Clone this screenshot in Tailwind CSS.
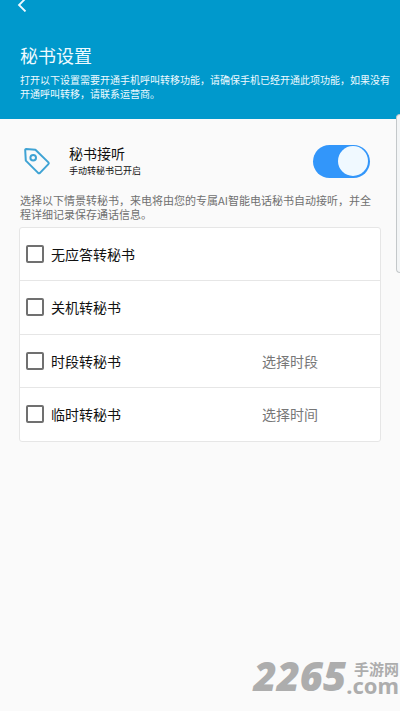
<!DOCTYPE html>
<html lang="zh-CN">
<head>
<meta charset="utf-8">
<meta name="viewport" content="width=device-width, initial-scale=1">
<title>秘书设置</title>
<script src="https://cdn.jsdelivr.net/npm/@tailwindcss/browser@4"></script>
</head>
<body class="relative flex min-h-screen flex-col overflow-x-hidden bg-[#fafafa] font-['Noto_Sans_CJK_SC',sans-serif] text-[#111]">
  <header class="bg-[#0099cc] pb-[18px] pl-5 text-[#effaff]">
    <a href="#" aria-label="返回" class="-ml-1 block w-4">
      <svg class="h-3 w-4" viewBox="0 0 16 12" fill="none" stroke="currentColor" stroke-width="1.8"><path d="M9.500 -1.500 3 5 9.500 11.500"/></svg>
    </a>
    <h1 class="mt-[31px] text-lg leading-6">秘书设置</h1>
    <p class="mt-[6px] whitespace-nowrap text-[10px] leading-[14px]">打开以下设置需要开通手机呼叫转移功能，请确保手机已经开通此项功能，如果没有<br>开通呼叫转移，请联系运营商。</p>
  </header>

  <main class="px-[19px] pt-6">
    <section class="flex items-center pr-[11px] pl-1">
      <svg class="h-8 w-7 shrink-0" viewBox="0 0 28 32" fill="none" stroke="#3fa3d4" stroke-width="2" stroke-linejoin="round"><path d="M2.200 5.200Q2 4.100 3.200 4.100L12.400 4.800 25.400 17.400Q26.200 18.300 25.400 19.100L17 27.900Q16 28.700 15.100 27.900L2.800 15.600Z"/><circle cx="10.200" cy="12.700" r="2.800"/></svg>
      <div class="ml-[18px] flex-1">
        <label for="answer" class="block text-sm leading-5">秘书接听</label>
        <p class="text-[9px] leading-4">手动转秘书已开启</p>
      </div>
      <input id="answer" type="checkbox" role="switch" checked class="flex h-[33px] w-[57px] appearance-none items-center rounded-full bg-[#a8a8a8] px-[2px] before:size-[30px] before:rounded-full before:bg-[#f0f9ff] before:content-[''] checked:justify-end checked:bg-[#3296fa]">
    </section>
    <p class="mt-[14px] pr-1 pl-px text-[11px] leading-[14px] text-[#707070]">选择以下情景转秘书，来电将由您的专属AI智能电话秘书自动接听，并全程详细记录保存通话信息。</p>

    <ul class="mt-[6px] grid min-h-[215px] auto-rows-fr divide-y divide-[#e6e6e6] rounded-[3px] border border-[#e6e6e6] bg-white text-sm">
      <li class="flex items-center pl-[6px]">
        <label class="flex flex-1 items-center gap-[7px]"><input type="checkbox" class="size-[18px] appearance-none rounded-[2px] border-2 border-[#707070] checked:bg-[#3296fa]">无应答转秘书</label>
      </li>
      <li class="flex items-center pl-[6px]">
        <label class="flex flex-1 items-center gap-[7px]"><input type="checkbox" class="size-[18px] appearance-none rounded-[2px] border-2 border-[#707070] checked:bg-[#3296fa]">关机转秘书</label>
      </li>
      <li class="flex items-center pl-[6px]">
        <label class="flex flex-1 items-center gap-[7px]"><input type="checkbox" class="size-[18px] appearance-none rounded-[2px] border-2 border-[#707070] checked:bg-[#3296fa]">时段转秘书</label>
        <button type="button" class="w-[180px] text-center text-[#777]">选择时段</button>
      </li>
      <li class="flex items-center pl-[6px]">
        <label class="flex flex-1 items-center gap-[7px]"><input type="checkbox" class="size-[18px] appearance-none rounded-[2px] border-2 border-[#707070] checked:bg-[#3296fa]">临时转秘书</label>
        <button type="button" class="w-[180px] text-center text-[#777]">选择时间</button>
      </li>
    </ul>
  </main>

  <!-- Edge handle of the side drawer -->
  <aside class="absolute top-[114px] right-0 h-[159px] w-1 rounded-l-[4px] border border-r-0 border-[#c4c8ca] bg-[#f3f5f6]"></aside>

  <footer class="mt-auto flex items-end justify-end pr-px pb-[18px] font-bold text-[#adadad]">
    <span class="font-['Noto_Sans',sans-serif] text-[40px] leading-[34px] font-black italic">2265</span>
    <span class="flex flex-col items-end">
      <span class="text-[15px] leading-4">手游网</span>
      <span class="font-['Noto_Sans',sans-serif] text-[22px] leading-4">.com</span>
    </span>
  </footer>
</body>
</html>
